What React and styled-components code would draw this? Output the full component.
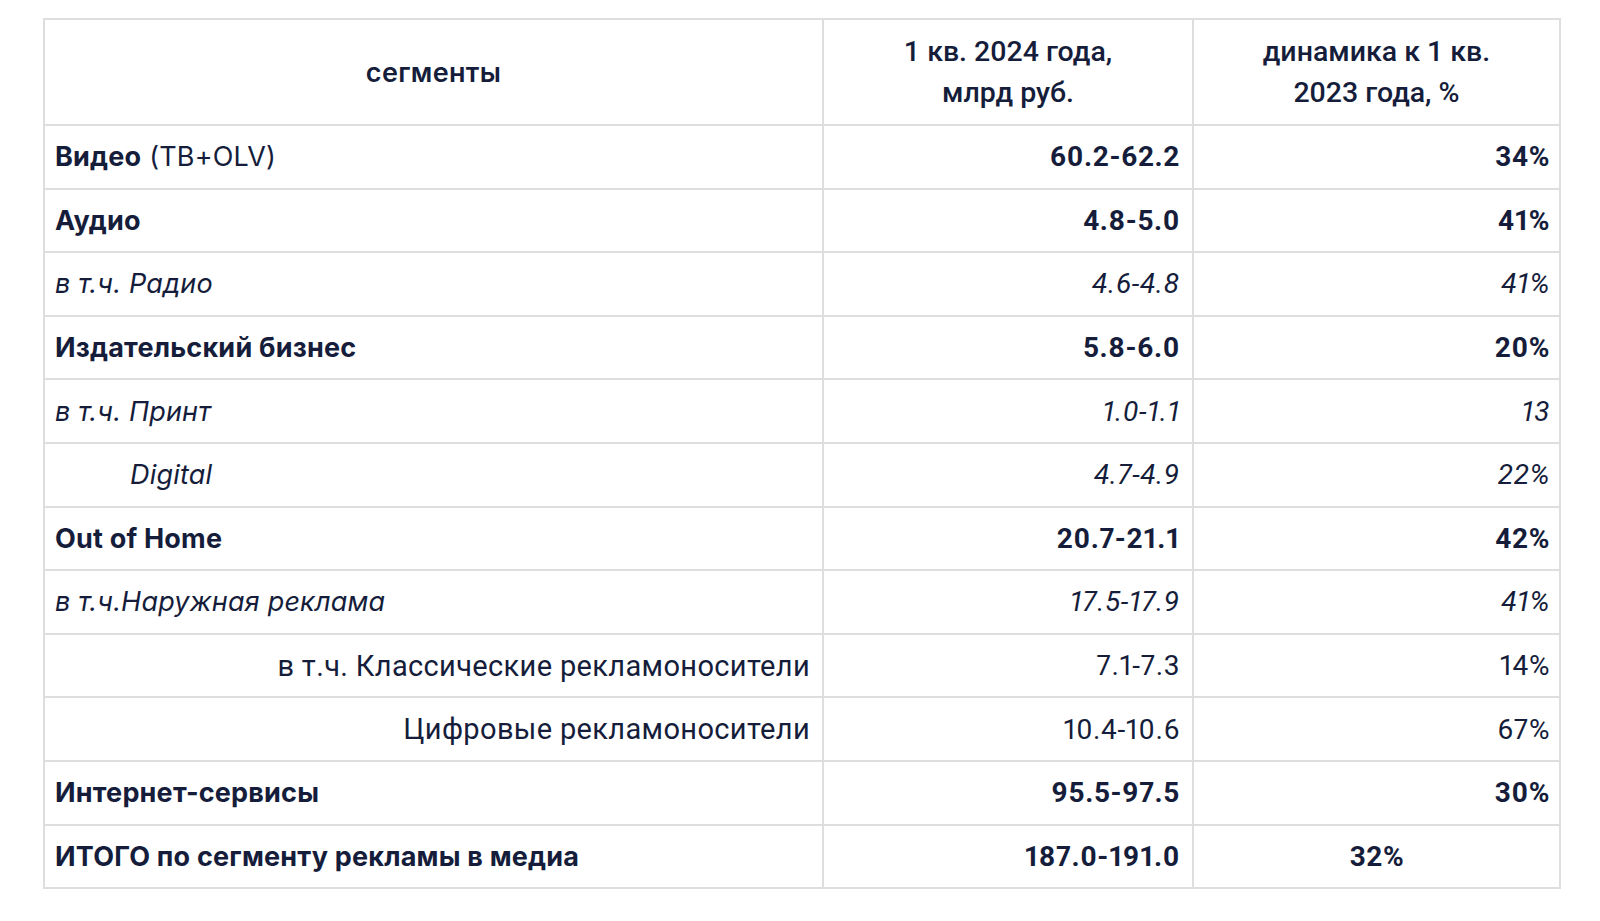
import React from 'react';
import styled, { createGlobalStyle } from 'styled-components';

const GlobalStyle = createGlobalStyle`
  body {
    margin: 0;
    background: #fff;
    font-family: Roboto, "Liberation Sans", sans-serif;
    color: #151d3b;
  }
`;

const Page = styled.div`
  padding: 18px 41px 0 43px;
`;

const Table = styled.table`
  width: 1516px;
  border-collapse: collapse;
  table-layout: fixed;
  border: 2px solid #dedede;
`;

const Col = styled.col`
  width: ${(p) => p.$w}px;
`;

const HeadCell = styled.th`
  height: 104px;
  padding: 0 12px;
  border: 2px solid #dedede;
  text-align: center;
  vertical-align: middle;
  font-family: ${(p) => (p.$label ? 'Inter, "Noto Sans", sans-serif' : 'Roboto, sans-serif')};
  font-weight: ${(p) => (p.$label ? 600 : 500)};
  font-size: ${(p) => (p.$label ? 27 : 28.5)}px;
  line-height: 41px;
  letter-spacing: ${(p) => (p.$label ? '0.3px' : '0')};
`;

const Row = styled.tr`
  height: 63.6px;
`;

const Cell = styled.td`
  padding: 0 ${(p) => (p.$last ? 9 : 12)}px 0 ${(p) => p.$indent || 10}px;
  border: 2px solid #dedede;
  text-align: ${(p) => p.$align || 'right'};
  vertical-align: middle;
  font-size: 28px;
  letter-spacing: 0.6px;
  font-variant-numeric: proportional-nums;
  font-weight: ${(p) => (p.$kind === 'bold' ? 700 : 400)};
  font-style: ${(p) => (p.$kind === 'italic' ? 'italic' : 'normal')};
  white-space: nowrap;
`;

const Label = styled(Cell)`
  font-family: ${(p) =>
    p.$align === 'right' ? 'Roboto, sans-serif' : 'Inter, "Noto Sans", sans-serif'};
  font-size: ${(p) => (p.$align === 'right' ? 29 : 27)}px;
  letter-spacing: ${(p) => (p.$align === 'right' ? '0.35px' : '0.2px')};
`;

const Light = styled.span`
  font-weight: 400;
`;

const rows = [
  { label: 'Видео', extra: ' (ТВ+OLV)', kind: 'bold', value: '60.2-62.2', change: '34%' },
  { label: 'Аудио', kind: 'bold', value: '4.8-5.0', change: '41%' },
  { label: 'в т.ч. Радио', kind: 'italic', value: '4.6-4.8', change: '41%' },
  { label: 'Издательский бизнес', kind: 'bold', value: '5.8-6.0', change: '20%' },
  { label: 'в т.ч. Принт', kind: 'italic', value: '1.0-1.1', change: '13' },
  { label: 'Digital', kind: 'italic', indent: 85, value: '4.7-4.9', change: '22%' },
  { label: 'Out of Home', kind: 'bold', value: '20.7-21.1', change: '42%' },
  { label: 'в т.ч.Наружная реклама', kind: 'italic', value: '17.5-17.9', change: '41%' },
  { label: 'в т.ч. Классические рекламоносители', kind: 'plain', align: 'right', value: '7.1-7.3', change: '14%' },
  { label: 'Цифровые рекламоносители', kind: 'plain', align: 'right', value: '10.4-10.6', change: '67%' },
  { label: 'Интернет-сервисы', kind: 'bold', value: '95.5-97.5', change: '30%' },
  { label: 'ИТОГО по сегменту рекламы в медиа', kind: 'bold', value: '187.0-191.0', change: '32%', centerChange: true },
];

export default function App() {
  return (
    <>
      <GlobalStyle />
      <Page>
        <Table>
          <colgroup>
            <Col $w={779} />
            <Col $w={370} />
            <Col $w={367} />
          </colgroup>
          <thead>
            <tr>
              <HeadCell $label>сегменты</HeadCell>
              <HeadCell>
                1 кв. 2024 года,
                <br />
                млрд руб.
              </HeadCell>
              <HeadCell>
                динамика к 1 кв.
                <br />
                2023 года, %
              </HeadCell>
            </tr>
          </thead>
          <tbody>
            {rows.map((r, i) => (
              <Row key={i}>
                <Label $kind={r.kind} $align={r.align || 'left'} $indent={r.indent}>
                  {r.label}
                  {r.extra && <Light>{r.extra}</Light>}
                </Label>
                <Cell $kind={r.kind}>{r.value}</Cell>
                <Cell $kind={r.kind} $last $align={r.centerChange ? 'center' : 'right'}>
                  {r.change}
                </Cell>
              </Row>
            ))}
          </tbody>
        </Table>
      </Page>
    </>
  );
}
